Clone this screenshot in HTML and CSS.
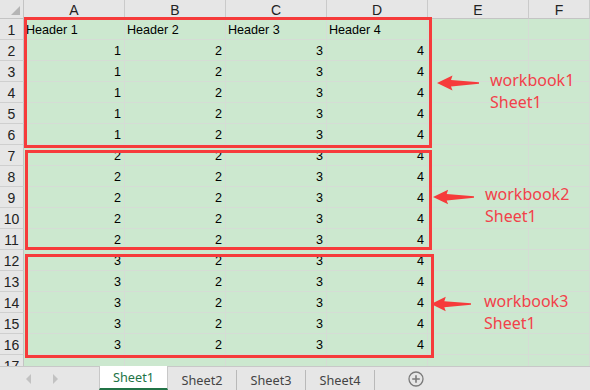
FILE: index.html
```html
<!DOCTYPE html>
<html>
<head>
<meta charset="utf-8">
<link rel="stylesheet" href="styles.css">
</head>
<body>
<div class="app">
  <div class="sheet">
    <div class="grid">
      <div class="corner"><span class="tri"></span></div>
      <div class="ch">A</div><div class="ch">B</div><div class="ch">C</div><div class="ch">D</div><div class="ch">E</div><div class="ch">F</div>

      <div class="rh">1</div><div class="c t">Header 1</div><div class="c t">Header 2</div><div class="c t">Header 3</div><div class="c t">Header 4</div><div class="c"></div><div class="c"></div>
      <div class="rh">2</div><div class="c">1</div><div class="c">2</div><div class="c">3</div><div class="c">4</div><div class="c"></div><div class="c"></div>
      <div class="rh">3</div><div class="c">1</div><div class="c">2</div><div class="c">3</div><div class="c">4</div><div class="c"></div><div class="c"></div>
      <div class="rh">4</div><div class="c">1</div><div class="c">2</div><div class="c">3</div><div class="c">4</div><div class="c"></div><div class="c"></div>
      <div class="rh">5</div><div class="c">1</div><div class="c">2</div><div class="c">3</div><div class="c">4</div><div class="c"></div><div class="c"></div>
      <div class="rh">6</div><div class="c">1</div><div class="c">2</div><div class="c">3</div><div class="c">4</div><div class="c"></div><div class="c"></div>
      <div class="rh">7</div><div class="c">2</div><div class="c">2</div><div class="c">3</div><div class="c">4</div><div class="c"></div><div class="c"></div>
      <div class="rh">8</div><div class="c">2</div><div class="c">2</div><div class="c">3</div><div class="c">4</div><div class="c"></div><div class="c"></div>
      <div class="rh">9</div><div class="c">2</div><div class="c">2</div><div class="c">3</div><div class="c">4</div><div class="c"></div><div class="c"></div>
      <div class="rh">10</div><div class="c">2</div><div class="c">2</div><div class="c">3</div><div class="c">4</div><div class="c"></div><div class="c"></div>
      <div class="rh">11</div><div class="c">2</div><div class="c">2</div><div class="c">3</div><div class="c">4</div><div class="c"></div><div class="c"></div>
      <div class="rh">12</div><div class="c">3</div><div class="c">2</div><div class="c">3</div><div class="c">4</div><div class="c"></div><div class="c"></div>
      <div class="rh">13</div><div class="c">3</div><div class="c">2</div><div class="c">3</div><div class="c">4</div><div class="c"></div><div class="c"></div>
      <div class="rh">14</div><div class="c">3</div><div class="c">2</div><div class="c">3</div><div class="c">4</div><div class="c"></div><div class="c"></div>
      <div class="rh">15</div><div class="c">3</div><div class="c">2</div><div class="c">3</div><div class="c">4</div><div class="c"></div><div class="c"></div>
      <div class="rh">16</div><div class="c">3</div><div class="c">2</div><div class="c">3</div><div class="c">4</div><div class="c"></div><div class="c"></div>
      <div class="rh">17</div><div class="c"></div><div class="c"></div><div class="c"></div><div class="c"></div><div class="c"></div><div class="c"></div>
    </div>

    <div class="box box1"></div>
    <div class="box box2"></div>
    <div class="box box3"></div>

    <svg class="arrow arrow1" viewBox="0 0 42 16" width="42" height="16"><polygon points="0,8 15.5,0.5 14,5 42,7.2 42,8.8 14,11.5 15.5,15.5" /></svg>
    <svg class="arrow arrow2" viewBox="0 0 42 16" width="41" height="16"><polygon points="0,8 15.5,0.5 14,5 42,7.2 42,8.8 14,11.5 15.5,15.5" /></svg>
    <svg class="arrow arrow3" viewBox="0 0 42 16" width="40" height="16"><polygon points="0,8 15.5,0.5 14,5 42,7.2 42,8.8 14,11.5 15.5,15.5" /></svg>

    <div class="label label1">workbook1<br>Sheet1</div>
    <div class="label label2">workbook2<br>Sheet1</div>
    <div class="label label3">workbook3<br>Sheet1</div>
  </div>

  <div class="tabbar">
    <div class="nav">
      <span class="navl"></span>
      <span class="navr"></span>
    </div>
    <div class="tab active">Sheet1</div>
    <div class="tab">Sheet2</div>
    <div class="tab">Sheet3</div>
    <div class="tab">Sheet4</div>
    <div class="add">
      <svg width="16" height="16" viewBox="0 0 16 16"><circle cx="8" cy="8" r="7" fill="none" stroke="#7a7a7a" stroke-width="1.3"/><path d="M8 4.2v7.6M4.2 8h7.6" stroke="#7a7a7a" stroke-width="1.6"/></svg>
    </div>
  </div>
</div>
</body>
</html>
```

FILE: styles.css
```css
* { box-sizing: border-box; }
html, body { margin: 0; padding: 0; }
body {
  width: 590px;
  height: 390px;
  overflow: hidden;
  background: #e6e6e6;
  font-family: "Liberation Sans", Arial, sans-serif;
}
.app {
  display: flex;
  flex-direction: column;
  width: 590px;
  height: 390px;
}
.sheet {
  position: relative;
  height: 366px;
  overflow: hidden;
  background: #cce8cf;
}
.grid {
  display: grid;
  grid-template-columns: 24px 101px 101px 101px 101px 101px 61px;
  grid-template-rows: 19px repeat(17, 21px);
}
.corner {
  position: relative;
  background: #e6e6e6;
  border-right: 1px solid #c4c4c4;
  border-bottom: 1px solid #c4c4c4;
}
.tri {
  position: absolute;
  right: 3px;
  bottom: 3px;
  width: 0;
  height: 0;
  border-left: 9px solid transparent;
  border-bottom: 9px solid #b5b5b5;
}
.ch {
  background: #e6e6e6;
  border-right: 1px solid #cacaca;
  border-bottom: 1px solid #c4c4c4;
  text-align: center;
  font-size: 14px;
  line-height: 20px;
  color: #222;
}
.rh {
  background: #e6e6e6;
  border-right: 1px solid #c4c4c4;
  border-bottom: 1px solid #cfcfcf;
  text-align: center;
  font-size: 14px;
  line-height: 22px;
  color: #222;
}
.c {
  border-right: 1px solid #d5dcd5;
  border-bottom: 1px solid #d5dcd5;
  font-size: 12.6px;
  line-height: 23px;
  text-align: right;
  padding: 0 3px 0 2px;
  color: #000;
}
.c.t { text-align: left; }

.box {
  position: absolute;
  border: 3px solid #f63b3b;
}
.box1 { left: 24px; top: 17px; width: 408px; height: 131px; }
.box2 { left: 25px; top: 150px; width: 407px; height: 100px; }
.box3 { left: 25px; top: 254px; width: 409px; height: 104px; }

.arrow { position: absolute; fill: #f63b3b; }
.arrow1 { left: 437px; top: 75px; }
.arrow2 { left: 433px; top: 189px; }
.arrow3 { left: 431px; top: 296px; }

.label {
  position: absolute;
  font-family: "Noto Sans", "Open Sans", sans-serif;
  font-size: 16px;
  line-height: 21.5px;
  color: #f2414a;
}
.label1 { left: 490px; top: 70px; }
.label2 { left: 485px; top: 184px; }
.label3 { left: 484px; top: 291px; }

.tabbar {
  display: flex;
  align-items: stretch;
  height: 24px;
  background: #e6e6e6;
  border-top: 1px solid #c8c8c8;
  font-family: "Noto Sans", "Open Sans", sans-serif;
  font-size: 12.7px;
  color: #444;
}
.nav {
  display: flex;
  align-items: center;
  gap: 22px;
  width: 99px;
  padding-left: 26px;
}
.navl, .navr {
  width: 0;
  height: 0;
  border-top: 5px solid transparent;
  border-bottom: 5px solid transparent;
}
.navl { border-right: 5px solid #c2c2c2; }
.navr { border-left: 5px solid #c2c2c2; }
.tab {
  width: 69px;
  display: flex;
  align-items: center;
  justify-content: center;
  border-right: 1px solid #b9b9b9;
  margin: 3px 0 0;
}
.tab.active {
  margin-top: -1px;
  background: #fff;
  color: #217346;
  border-right: 1px solid #c8c8c8;
  border-bottom: 2px solid #217346;
  border-left: 1px solid #c8c8c8;
}
.add {
  display: flex;
  align-items: center;
  padding-left: 33px;
}
```
